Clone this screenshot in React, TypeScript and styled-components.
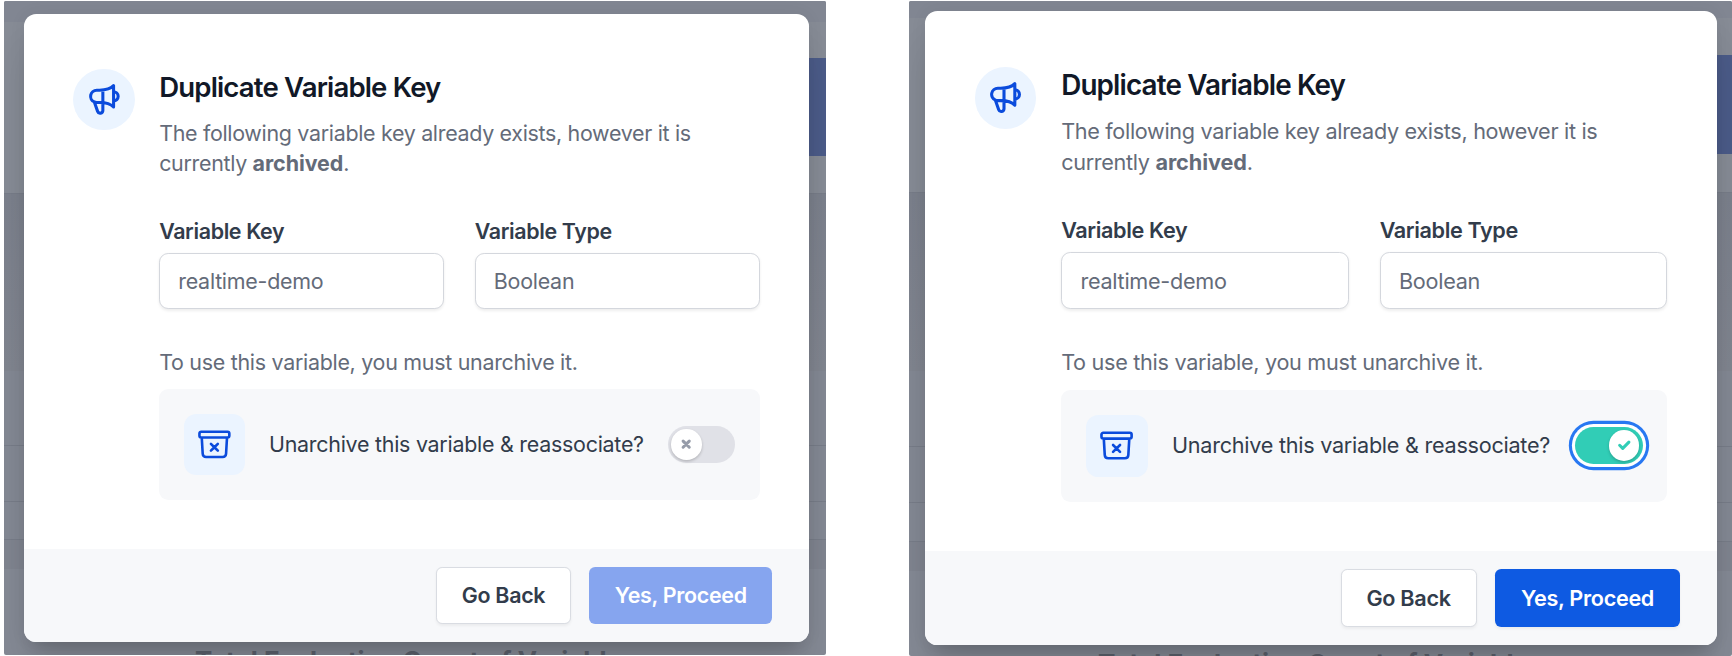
import React from "react";
import styled, { createGlobalStyle, css } from "styled-components";

const u = (n: number) => `calc(var(--u) * ${n})`;

const GlobalStyle = createGlobalStyle`
  *, *::before, *::after { box-sizing: border-box; }
  body { margin: 0; background: #fff; font-family: Inter, "Liberation Sans", sans-serif; }
  h2, p { margin: 0; }
  button { font: inherit; }
`;

const Page = styled.main`
  display: flex;
  justify-content: space-between;
  width: 1732px;
  height: 656px;
  padding: 1px 0 0 4px;
  overflow: hidden;
`;

const Panel = styled.section<{ $unit: number; $width: number; $height: number }>`
  --u: ${(p) => p.$unit}px;
  position: relative;
  width: ${(p) => p.$width}px;
  height: ${(p) => p.$height}px;
  overflow: hidden;
  border-radius: 2px;
  background: #848994;
`;

const Backdrop = styled.div`
  display: flex;
  flex-direction: column;
  height: 100%;
`;

const Band = styled.div<{ $h: number; $bg: string; $line?: boolean }>`
  display: flex;
  justify-content: flex-end;
  align-items: flex-start;
  flex: none;
  height: ${(p) => p.$h}px;
  background: ${(p) => p.$bg};
  ${(p) => p.$line && css`border-bottom: 1px solid #777c88;`}
`;

const PageButton = styled.div<{ $top: number; $h: number }>`
  width: 60px;
  height: ${(p) => p.$h}px;
  margin-top: ${(p) => p.$top}px;
  background: #4b5b88;
`;

const ChartTitle = styled.div<{ $left: number; $top: number }>`
  padding: ${(p) => p.$top}px 0 0 ${(p) => p.$left}px;
  font-size: ${u(16.9)};
  line-height: 24px;
  font-weight: 700;
  white-space: nowrap;
  color: #5b606c;
`;

const Overlay = styled.div<{ $x: number; $y: number }>`
  position: absolute;
  inset: 0;
  padding: ${(p) => p.$y}px 0 0 ${(p) => p.$x}px;
`;

const Dialog = styled.div`
  display: flex;
  flex-direction: column;
  width: ${u(512)};
  height: ${u(410.2)};
  overflow: hidden;
  border-radius: ${u(8)};
  background: #fff;
  box-shadow: 0 ${u(20)} ${u(25)} ${u(-5)} rgba(0, 0, 0, 0.13), 0 ${u(8)} ${u(10)} ${u(-6)} rgba(0, 0, 0, 0.13),
    0 0 ${u(12)} rgba(0, 0, 0, 0.05);
`;

const Body = styled.div`
  display: flex;
  gap: ${u(16)};
  flex: 1;
  padding: ${u(36)} ${u(32)} 0;
`;

const IconTile = styled.div<{ $round?: boolean }>`
  display: flex;
  align-items: center;
  justify-content: center;
  flex: none;
  width: ${u(40)};
  height: ${u(40)};
  border-radius: ${(p) => (p.$round ? "50%" : u(8))};
  background: #ebf4ff;
  color: #0b4bdc;
  svg { width: ${u(24)}; height: ${u(24)}; }
`;

const Content = styled.div`
  flex: 1;
  min-width: 0;
`;

const Title = styled.h2`
  font-size: ${u(18)};
  line-height: ${u(24)};
  font-weight: 600;
  letter-spacing: -0.0305em;
  color: #111827;
`;

const Text = styled.p`
  font-size: ${u(14)};
  line-height: ${u(20)};
  letter-spacing: -0.0148em;
  color: #646b79;
`;

const Description = styled(Text)`
  margin-top: ${u(8)};
  strong { font-weight: 700; letter-spacing: -0.003em; }
`;

const Fields = styled.div`
  display: grid;
  grid-template-columns: 1fr 1fr;
  gap: ${u(20)};
  margin-top: ${u(24)};
`;

const Label = styled.div`
  font-size: ${u(14)};
  line-height: ${u(20)};
  font-weight: 600;
  letter-spacing: -0.0175em;
  color: #323c4b;
`;

const Input = styled.div`
  display: flex;
  align-items: center;
  height: ${u(37)};
  margin-top: ${u(4)};
  padding: 0 ${u(11.8)};
  border: 1px solid #d4d7dd;
  border-radius: ${u(6)};
  background: #fff;
  box-shadow: 0 ${u(1)} ${u(2)} rgba(0, 0, 0, 0.07);
  font-size: ${u(14)};
  letter-spacing: -0.0125em;
  color: #646b79;
`;

const Note = styled(Text)`
  margin-top: ${u(24.5)};
  letter-spacing: -0.0135em;
`;

const Option = styled.div`
  display: flex;
  align-items: center;
  height: ${u(72.4)};
  margin-top: ${u(7.5)};
  padding: 0 ${u(16)};
  border-radius: ${u(6)};
  background: #f7f8fa;
`;

const OptionLabel = styled.div`
  flex: 1;
  margin-left: ${u(15.7)};
  font-size: ${u(14)};
  line-height: ${u(20)};
  letter-spacing: -0.0123em;
  white-space: nowrap;
  color: #323c4b;
`;

const Toggle = styled.div<{ $on: boolean }>`
  display: flex;
  align-items: center;
  justify-content: ${(p) => (p.$on ? "flex-end" : "flex-start")};
  flex: none;
  width: ${u(44)};
  height: ${u(24)};
  padding: ${u(2)};
  border-radius: ${u(12)};
  background: ${(p) => (p.$on ? "#31cdb6" : "#e0e1e7")};
  ${(p) => p.$on && css`box-shadow: 0 0 0 ${u(2)} #fff, 0 0 0 ${u(4)} #2878f2;`}
`;

const Knob = styled.span<{ $on: boolean }>`
  display: flex;
  align-items: center;
  justify-content: center;
  width: ${u(20)};
  height: ${u(20)};
  border-radius: 50%;
  background: #fff;
  box-shadow: 0 ${u(1)} ${u(2)} rgba(0, 0, 0, 0.2);
  color: ${(p) => (p.$on ? "#31cdb6" : "#969ca9")};
  svg { width: ${u(12)}; height: ${u(12)}; }
`;

const Footer = styled.footer`
  display: flex;
  align-items: center;
  justify-content: flex-end;
  gap: ${u(12)};
  flex: none;
  height: ${u(61)};
  padding: 0 ${u(23.8)};
  background: #f7f8fa;
`;

const Button = styled.button<{ $primary?: boolean }>`
  width: ${(p) => u(p.$primary ? 119.5 : 88)};
  height: ${u(37.4)};
  padding: 0;
  border: ${(p) => (p.$primary ? "none" : "1px solid #d9dce2")};
  border-radius: ${u(4)};
  background: ${(p) => (p.$primary ? "#0e5ae2" : "#fff")};
  box-shadow: 0 ${u(1)} ${u(2)} rgba(0, 0, 0, 0.05);
  font-size: ${u(14)};
  font-weight: 600;
  letter-spacing: -0.0145em;
  color: ${(p) => (p.$primary ? "#fff" : "#323c4b")};
  &:disabled { background: #86a5ef; box-shadow: none; }
`;

const MegaphoneIcon = () => (
  <svg viewBox="0 0 24 24" fill="none" stroke="currentColor" strokeWidth="2" strokeLinecap="round" strokeLinejoin="round">
    <path d="M11 5.882V19.24a1.76 1.76 0 01-3.417.592l-2.147-6.15M18 13a3 3 0 100-6M5.436 13.683A4.001 4.001 0 017 6h1.832c4.1 0 7.625-1.234 9.168-3v14c-1.543-1.766-5.067-3-9.168-3H7a3.988 3.988 0 01-1.564-.317z" />
  </svg>
);

const ArchiveIcon = () => (
  <svg viewBox="0 0 24 24" fill="none" stroke="currentColor" strokeWidth="1.7" strokeLinecap="round" strokeLinejoin="round">
    <path d="M20.25 7.5l-.625 10.632a2.25 2.25 0 01-2.247 2.118H6.622a2.25 2.25 0 01-2.247-2.118L3.75 7.5m6 4.125l2.25 2.25m0 0l2.25 2.25M12 13.875l2.25-2.25M12 13.875l-2.25 2.25M3.375 7.5h17.25c.621 0 1.125-.504 1.125-1.125v-1.5c0-.621-.504-1.125-1.125-1.125H3.375c-.621 0-1.125.504-1.125 1.125v1.5c0 .621.504 1.125 1.125 1.125z" />
  </svg>
);

const CrossIcon = () => (
  <svg viewBox="0 0 12 12" fill="none" stroke="currentColor" strokeWidth="2" strokeLinecap="round" strokeLinejoin="round">
    <path d="M4 8l2-2m0 0l2-2M6 6L4 4m2 2l2 2" />
  </svg>
);

const CheckIcon = () => (
  <svg viewBox="0 0 12 12" fill="currentColor">
    <path d="M3.707 5.293a1 1 0 00-1.414 1.414l1.414-1.414zM5 8l-.707.707a1 1 0 001.414 0L5 8zm4.707-3.293a1 1 0 00-1.414-1.414l1.414 1.414zm-7.414 2l2 2 1.414-1.414-2-2-1.414 1.414zm3.414 2l4-4-1.414-1.414-4 4 1.414 1.414z" />
  </svg>
);

interface StateProps {
  on: boolean;
  unit: number;
  width: number;
  height: number;
  x: number;
  y: number;
  bands: number[];
  button: [number, number];
  chart: [number, number];
}

const DialogState = ({ on, unit, width, height, x, y, bands, button, chart }: StateProps) => (
  <Panel $unit={unit} $width={width} $height={height}>
    <Backdrop>
      <Band $h={bands[0]} $bg="#818692" />
      <Band $h={bands[1]} $bg="#868b95" $line>
        <PageButton $top={button[0]} $h={button[1]} />
      </Band>
      <Band $h={bands[2]} $bg="linear-gradient(#7b808c, #80858f)" />
      <Band $h={bands[3]} $bg="#838893" $line />
      <Band $h={bands[4]} $bg="#838893" $line />
      <Band $h={bands[5]} $bg="#838893" $line />
      <Band $h={bands[6]} $bg="#7f848f" />
      <ChartTitle $left={chart[0]} $top={chart[1]}>Total Evaluation Count of Variable</ChartTitle>
    </Backdrop>
    <Overlay $x={x} $y={y}>
      <Dialog>
        <Body>
          <IconTile $round>
            <MegaphoneIcon />
          </IconTile>
          <Content>
            <Title>Duplicate Variable Key</Title>
            <Description>
              The following variable key already exists, however it is
              <br />
              currently <strong>archived</strong>.
            </Description>
            <Fields>
              <div>
                <Label>Variable Key</Label>
                <Input>realtime-demo</Input>
              </div>
              <div>
                <Label>Variable Type</Label>
                <Input>Boolean</Input>
              </div>
            </Fields>
            <Note>To use this variable, you must unarchive it.</Note>
            <Option>
              <IconTile>
                <ArchiveIcon />
              </IconTile>
              <OptionLabel>Unarchive this variable &amp; reassociate?</OptionLabel>
              <Toggle $on={on} role="switch" aria-checked={on}>
                <Knob $on={on}>{on ? <CheckIcon /> : <CrossIcon />}</Knob>
              </Toggle>
            </Option>
          </Content>
        </Body>
        <Footer>
          <Button>Go Back</Button>
          <Button $primary disabled={!on}>
            Yes, Proceed
          </Button>
        </Footer>
      </Dialog>
    </Overlay>
  </Panel>
);

export default function App() {
  return (
    <>
      <GlobalStyle />
      <Page>
        <DialogState
          on={false}
          unit={1.532}
          width={822}
          height={654}
          x={20.4}
          y={12.7}
          bands={[21, 172, 177, 75, 56, 38, 29]}
          button={[36, 98]}
          chart={[191, 80]}
        />
        <DialogState
          on
          unit={1.5462}
          width={823}
          height={655}
          x={16.1}
          y={10}
          bands={[17, 175, 178, 76, 56, 39, 29]}
          button={[37, 99]}
          chart={[189, 81]}
        />
      </Page>
    </>
  );
}
